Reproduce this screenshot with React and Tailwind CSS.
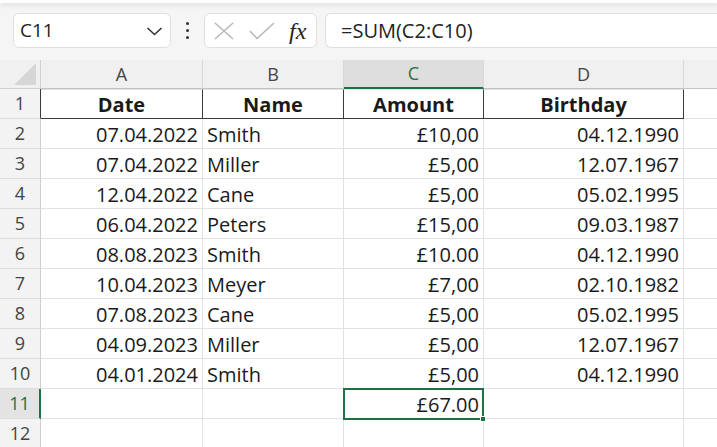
import React from 'react';

const rows = [
  ['07.04.2022', 'Smith', '£10,00', '04.12.1990'],
  ['07.04.2022', 'Miller', '£5,00', '12.07.1967'],
  ['12.04.2022', 'Cane', '£5,00', '05.02.1995'],
  ['06.04.2022', 'Peters', '£15,00', '09.03.1987'],
  ['08.08.2023', 'Smith', '£10.00', '04.12.1990'],
  ['10.04.2023', 'Meyer', '£7,00', '02.10.1982'],
  ['07.08.2023', 'Cane', '£5,00', '05.02.1995'],
  ['04.09.2023', 'Miller', '£5,00', '12.07.1967'],
  ['04.01.2024', 'Smith', '£5,00', '04.12.1990'],
];

const font = { fontFamily: '"Open Sans", "Liberation Sans", sans-serif' };

function RowHead({ n, active, dark }) {
  return (
    <div
      className={`w-[41px] shrink-0 h-full flex items-center justify-center text-[18px] ${
        active
          ? 'bg-[#e3e3e3] text-[#1e7145] border-r-2 border-r-[#1e7145] border-b border-b-[#dcdcdc]'
          : `bg-[#f3f3f3] text-[#444] border-b border-b-[#dcdcdc] border-r ${dark ? 'border-r-[#3a3a3a]' : 'border-r-[#cfcfcf]'}`
      }`}
    >
      {n}
    </div>
  );
}

function Cell({ w, children, align = 'right', bold, className = '' }) {
  const a = align === 'right' ? 'justify-end pr-[4px]' : align === 'center' ? 'justify-center' : 'justify-start pl-[4px]';
  return (
    <div
      className={`${w} shrink-0 h-full flex items-center pt-[2px] text-[20px] text-[#1a1a1a] border-r border-b border-[#e1e1e1] ${a} ${bold ? 'font-bold' : ''} ${className}`}
    >
      {children}
    </div>
  );
}

export default function App() {
  return (
    <div className="w-[717px] h-[447px] overflow-hidden bg-white" style={font}>
      {/* top strip */}
      <div className="h-[3px] bg-white shadow-[0_2px_5px_rgba(0,0,0,0.12)] relative z-10" />

      {/* formula bar */}
      <div className="h-[57px] bg-[#f5f5f5] flex items-start pt-[10px] pl-[13px]">
        <div className="w-[158px] h-[35px] bg-white rounded-[6px] border border-[#e0e0e0] flex items-center justify-between pl-[6px] pr-[7px]">
          <span className="text-[19px] text-[#222]">C11</span>
          <svg width="17" height="10" viewBox="0 0 17 10">
            <path d="M1.5 2 L8.5 8.5 L15.5 2" fill="none" stroke="#333" strokeWidth="1.6" />
          </svg>
        </div>
        <div className="w-[33px] h-[35px] flex flex-col items-center justify-center gap-[4px]">
          <div className="w-[3px] h-[3px] rounded-full bg-[#333]" />
          <div className="w-[3px] h-[3px] rounded-full bg-[#333]" />
          <div className="w-[3px] h-[3px] rounded-full bg-[#333]" />
        </div>
        <div className="w-[113px] h-[35px] bg-white rounded-[6px] border border-[#e0e0e0] flex items-center pl-[9px]">
          <svg width="20" height="18" viewBox="0 0 20 18">
            <path d="M1 1 L19 17 M19 1 L1 17" stroke="#b4b4b4" strokeWidth="1.4" fill="none" />
          </svg>
          <svg width="26" height="18" viewBox="0 0 26 18" className="ml-[15px]">
            <path d="M1 9 L8 16.5 L25 1" stroke="#b4b4b4" strokeWidth="1.4" fill="none" />
          </svg>
          <span
            className="ml-[14px] text-[24px] italic text-[#222] leading-none"
            style={{ fontFamily: '"Liberation Serif", "DejaVu Serif", serif' }}
          >
            fx
          </span>
        </div>
        <div className="flex-1 ml-[8px] h-[35px] bg-white rounded-l-[6px] border border-r-0 border-[#e0e0e0] flex items-center pl-[15px]">
          <span className="text-[20px] text-[#222]">=SUM(C2:C10)</span>
        </div>
      </div>

      {/* column headers */}
      <div className="h-[29px] flex bg-[#f0f0f0] text-[18px] text-[#444]">
        <div className="w-[41px] shrink-0 h-full border-r border-b border-[#d0d0d0] flex items-end justify-end pr-[4px] pb-[3px]">
          <svg width="22" height="22" viewBox="0 0 22 22">
            <path d="M22 0 L22 22 L0 22 Z" fill="#d6d6d6" />
          </svg>
        </div>
        <div className="w-[162px] shrink-0 border-r border-b border-r-[#d8d8d8] border-b-[#c4c4c4] flex items-center justify-center">A</div>
        <div className="w-[141px] shrink-0 border-r border-b border-r-[#d8d8d8] border-b-[#c4c4c4] flex items-center justify-center">B</div>
        <div className="w-[140px] shrink-0 bg-[#dedede] border-r border-r-[#d8d8d8] border-b-2 border-b-[#1e7145] text-[#1e7145] flex items-center justify-center">C</div>
        <div className="w-[200px] shrink-0 border-r border-b border-r-[#d8d8d8] border-b-[#c4c4c4] flex items-center justify-center">D</div>
        <div className="flex-1 border-b border-b-[#c4c4c4]" />
      </div>

      {/* row 1 header */}
      <div className="h-[30px] flex">
        <RowHead n="1" dark />
        <Cell w="w-[162px]" align="center" bold className="border-t border-[#3a3a3a] border-r-[#3a3a3a] border-b-[#3a3a3a]">Date</Cell>
        <Cell w="w-[141px]" align="center" bold className="border-t border-[#3a3a3a] border-r-[#3a3a3a] border-b-[#3a3a3a]">Name</Cell>
        <Cell w="w-[140px]" align="center" bold className="border-t border-[#3a3a3a] border-r-[#3a3a3a] border-b-[#3a3a3a]">Amount</Cell>
        <Cell w="w-[200px]" align="center" bold className="border-t border-[#3a3a3a] border-r-[#3a3a3a] border-b-[#3a3a3a]">Birthday</Cell>
        <div className="flex-1 h-full border-b border-[#e1e1e1]" />
      </div>

      {rows.map((r, i) => (
        <div key={i} className="h-[30px] flex">
          <RowHead n={i + 2} />
          <Cell w="w-[162px]">{r[0]}</Cell>
          <Cell w="w-[141px]" align="left">{r[1]}</Cell>
          <Cell w="w-[140px]">{r[2]}</Cell>
          <Cell w="w-[200px]">{r[3]}</Cell>
          <div className="flex-1 h-full border-b border-[#e1e1e1]" />
        </div>
      ))}

      {/* row 11 */}
      <div className="h-[30px] flex">
        <RowHead n="11" active />
        <Cell w="w-[162px]" />
        <Cell w="w-[141px]" />
        <Cell w="w-[140px]" className="relative">
          £67.00
          <div className="absolute -top-[1px] -left-[1px] -right-[1px] -bottom-[2px] border-2 border-[#1e7145] pointer-events-none" />
          <div className="absolute -right-[3px] -bottom-[4px] w-[6px] h-[6px] bg-[#1e7145] border border-white" />
        </Cell>
        <Cell w="w-[200px]" />
        <div className="flex-1 h-full border-b border-[#e1e1e1]" />
      </div>

      {/* row 12 */}
      <div className="h-[30px] flex">
        <RowHead n="12" />
        <Cell w="w-[162px]" />
        <Cell w="w-[141px]" />
        <Cell w="w-[140px]" />
        <Cell w="w-[200px]" />
        <div className="flex-1 h-full border-b border-[#e1e1e1]" />
      </div>
    </div>
  );
}
